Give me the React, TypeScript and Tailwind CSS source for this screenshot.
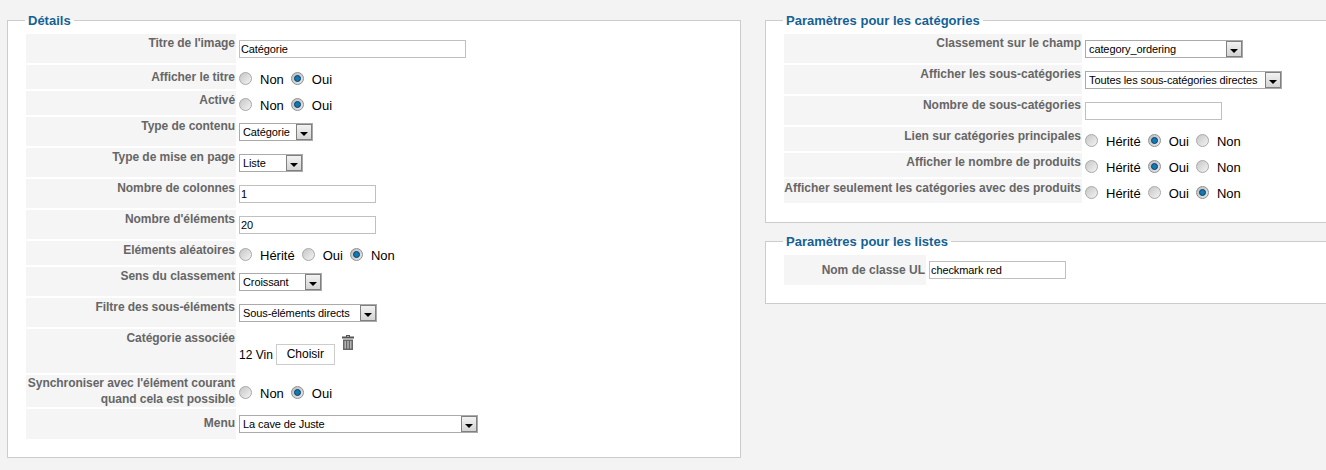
import type { ReactNode } from 'react'

function Radio({ checked = false }: { checked?: boolean }) {
  return (
    <span className={`flex h-[13px] w-[13px] shrink-0 items-center justify-center rounded-full border bg-gradient-to-br ${checked ? 'border-[#8f8f8f] from-[#bdbdbd] to-[#e8e8e8]' : 'border-[#a8a8a8] from-[#c6c6c6] to-[#f4f4f4]'}`}>
      {checked && <span className="h-[7px] w-[7px] rounded-full border border-[#0b3f66] bg-[#0f7ab5]" />}
    </span>
  )
}

function Radios({ items, selected }: { items: string[]; selected: string }) {
  return (
    <div className="flex items-center text-[13px] leading-[15px] text-black">
      {items.map((item) => (
        <div key={item} className="flex items-center">
          <Radio checked={item === selected} />
          <span className="ml-[8px] mr-[7px] pt-[2px]">{item}</span>
        </div>
      ))}
    </div>
  )
}

function TextBox({ value = '', className }: { value?: string; className: string }) {
  return (
    <div className={`h-[18px] border border-[#c0c0c0] bg-white pl-[1px] text-[11px] leading-[16px] tracking-[-0.1px] text-black ${className}`}>
      {value}
    </div>
  )
}

function SelectBox({ value, className }: { value: string; className: string }) {
  return (
    <div className={`flex h-[18px] items-center justify-between border border-[#aaaaaa] bg-white pl-[3px] text-[11px] leading-[16px] tracking-[-0.1px] text-black ${className}`}>
      <span className="whitespace-nowrap">{value}</span>
      <span className="flex h-[16px] w-[16px] shrink-0 items-end justify-center border border-[#808080] bg-gradient-to-b from-[#f2f2f2] to-[#d4d4d4] pb-[3px]">
        <span className="h-0 w-0 border-x-[4px] border-t-[4px] border-x-transparent border-t-black" />
      </span>
    </div>
  )
}

function Row({
  label,
  labelWidth,
  rowClass,
  labelClass = 'pt-[2px]',
  controlClass = 'pt-[6px]',
  children,
}: {
  label: ReactNode
  labelWidth: string
  rowClass: string
  labelClass?: string
  controlClass?: string
  children: ReactNode
}) {
  return (
    <div className={`flex gap-[2px] ${rowClass}`}>
      <div className={`shrink-0 bg-[#f5f5f5] pr-[1px] text-right text-[12px] font-bold leading-[15px] text-[#666666] ${labelWidth} ${labelClass}`}>
        {label}
      </div>
      <div className={`pl-[1px] ${controlClass}`}>{children}</div>
    </div>
  )
}

function Panel({ title, className, children }: { title: string; className: string; children: ReactNode }) {
  return (
    <fieldset className={`border border-[#cccccc] bg-white ${className}`}>
      <legend className="ml-[17px] px-[3px] text-[13px] font-bold leading-[15px] text-[#146295]">{title}</legend>
      <div className="flex flex-col gap-[2px] pl-[18px] pt-[6px]">{children}</div>
    </fieldset>
  )
}

export default function App() {
  const left = 'w-[210px] tracking-[-0.05px]'
  const right = 'w-[298px]'
  const radioRow = 'pt-[5px]'

  return (
    <div className="flex h-[470px] w-[1326px] items-start gap-[24px] overflow-hidden bg-[#f3f3f3] pl-[7px] pt-[13px] font-['Liberation_Sans',Arial,sans-serif]">
      <Panel title="Détails" className="h-[445px] w-[734px] shrink-0">
        <Row label="Titre de l'image" labelWidth={left} rowClass="h-[29px]">
          <TextBox value="Catégorie" className="w-[227px]" />
        </Row>
        <Row label="Afficher le titre" labelWidth={left} rowClass="h-[24px]" labelClass="pt-[5px]" controlClass="pt-[5px]">
          <Radios items={['Non', 'Oui']} selected="Oui" />
        </Row>
        <Row label="Activé" labelWidth={left} rowClass="h-[24px]" controlClass={radioRow}>
          <Radios items={['Non', 'Oui']} selected="Oui" />
        </Row>
        <Row label="Type de contenu" labelWidth={left} rowClass="h-[29px]">
          <SelectBox value="Catégorie" className="w-[74px]" />
        </Row>
        <Row label="Type de mise en page" labelWidth={left} rowClass="h-[29px]">
          <SelectBox value="Liste" className="w-[64px]" />
        </Row>
        <Row label="Nombre de colonnes" labelWidth={left} rowClass="h-[29px]">
          <TextBox value="1" className="w-[137px]" />
        </Row>
        <Row label="Nombre d'éléments" labelWidth={left} rowClass="h-[29px]">
          <TextBox value="20" className="w-[137px]" />
        </Row>
        <Row label="Eléments aléatoires" labelWidth={left} rowClass="h-[24px]" controlClass={radioRow}>
          <Radios items={['Hérité', 'Oui', 'Non']} selected="Non" />
        </Row>
        <Row label="Sens du classement" labelWidth={left} rowClass="h-[29px]">
          <SelectBox value="Croissant" className="w-[83px]" />
        </Row>
        <Row label="Filtre des sous-éléments" labelWidth={left} rowClass="h-[29px]">
          <SelectBox value="Sous-éléments directs" className="w-[138px]" />
        </Row>
        <Row label="Catégorie associée" labelWidth={left} rowClass="h-[44px]" controlClass="pt-[6px]">
          <div className="flex items-start">
            <div className="mt-[8px] flex items-center text-[12px] leading-[21px] text-black">
              <span className="mr-[3px] pt-[2px]">12 Vin</span>
              <span className="h-[21px] w-[59px] border border-[#cccccc] bg-white text-center leading-[19px]">Choisir</span>
            </div>
            <svg viewBox="0 0 12 15" className="ml-[7px] h-[15px] w-[12px]">
              <path d="M4 0h4v1.5h4V3.5H0V1.5h4zM5 1v.5h2V1z" fill="#555555" fillRule="evenodd" />
              <rect x="1" y="4.5" width="10" height="10.5" fill="#666666" />
              <rect x="2.5" y="6" width="1.5" height="7.5" fill="#b5b5b5" />
              <rect x="5.25" y="6" width="1.5" height="7.5" fill="#b5b5b5" />
              <rect x="8" y="6" width="1.5" height="7.5" fill="#b5b5b5" />
            </svg>
          </div>
        </Row>
        <Row
          label={
            <span className="block leading-[16px]">
              Synchroniser avec l'élément courant
              <br />
              quand cela est possible
            </span>
          }
          labelWidth={left}
          rowClass="h-[32px]"
          labelClass="pt-[0px]"
          controlClass="pt-[9px]"
        >
          <Radios items={['Non', 'Oui']} selected="Oui" />
        </Row>
        <Row label="Menu" labelWidth={left} rowClass="h-[30px]" labelClass="pt-[7px]">
          <SelectBox value="La cave de Juste" className="w-[239px]" />
        </Row>
      </Panel>

      <div className="flex w-[620px] shrink-0 flex-col gap-[11px]">
        <Panel title="Paramètres pour les catégories" className="h-[210px]">
          <Row label="Classement sur le champ" labelWidth={right} rowClass="h-[29px]">
            <SelectBox value="category_ordering" className="w-[158px]" />
          </Row>
          <Row label="Afficher les sous-catégories" labelWidth={right} rowClass="h-[29px]">
            <SelectBox value="Toutes les sous-catégories directes" className="w-[197px]" />
          </Row>
          <Row label="Nombre de sous-catégories" labelWidth={right} rowClass="h-[29px]">
            <TextBox className="w-[137px]" />
          </Row>
          <Row label="Lien sur catégories principales" labelWidth={right} rowClass="h-[24px]" controlClass={radioRow}>
            <Radios items={['Hérité', 'Oui', 'Non']} selected="Oui" />
          </Row>
          <Row label="Afficher le nombre de produits" labelWidth={right} rowClass="h-[24px]" controlClass={radioRow}>
            <Radios items={['Hérité', 'Oui', 'Non']} selected="Oui" />
          </Row>
          <Row label="Afficher seulement les catégories avec des produits" labelWidth={right} rowClass="h-[24px]" controlClass={radioRow}>
            <Radios items={['Hérité', 'Oui', 'Non']} selected="Non" />
          </Row>
        </Panel>
        <Panel title="Paramètres pour les listes" className="h-[70px]">
          <Row label="Nom de classe UL" labelWidth="w-[142px]" rowClass="h-[30px]" labelClass="pt-[8px]">
            <TextBox value="checkmark red" className="w-[137px]" />
          </Row>
        </Panel>
      </div>
    </div>
  )
}
